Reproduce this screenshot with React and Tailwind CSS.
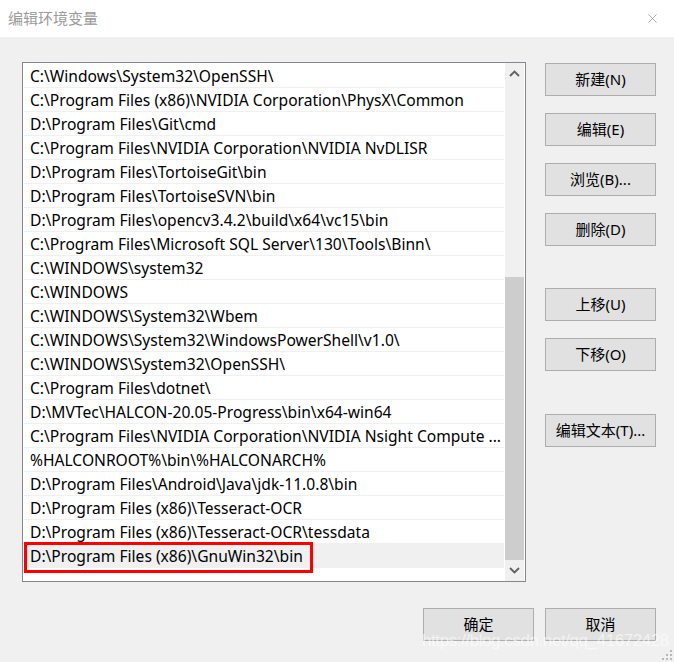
import { X } from "lucide-react";

/* ─── Data ─── */
const paths = [
  "C:\\Windows\\System32\\OpenSSH\\",
  "C:\\Program Files (x86)\\NVIDIA Corporation\\PhysX\\Common",
  "D:\\Program Files\\Git\\cmd",
  "C:\\Program Files\\NVIDIA Corporation\\NVIDIA NvDLISR",
  "D:\\Program Files\\TortoiseGit\\bin",
  "D:\\Program Files\\TortoiseSVN\\bin",
  "D:\\Program Files\\opencv3.4.2\\build\\x64\\vc15\\bin",
  "C:\\Program Files\\Microsoft SQL Server\\130\\Tools\\Binn\\",
  "C:\\WINDOWS\\system32",
  "C:\\WINDOWS",
  "C:\\WINDOWS\\System32\\Wbem",
  "C:\\WINDOWS\\System32\\WindowsPowerShell\\v1.0\\",
  "C:\\WINDOWS\\System32\\OpenSSH\\",
  "C:\\Program Files\\dotnet\\",
  "D:\\MVTec\\HALCON-20.05-Progress\\bin\\x64-win64",
  "C:\\Program Files\\NVIDIA Corporation\\NVIDIA Nsight Compute ...",
  "%HALCONROOT%\\bin\\%HALCONARCH%",
  "D:\\Program Files\\Android\\Java\\jdk-11.0.8\\bin",
  "D:\\Program Files (x86)\\Tesseract-OCR",
  "D:\\Program Files (x86)\\Tesseract-OCR\\tessdata",
  "D:\\Program Files (x86)\\GnuWin32\\bin",
];

const font = { fontFamily: '"Noto Sans", "Noto Sans CJK SC", sans-serif' };

function Btn({ children, className = "" }) {
  return (
    <button className={`w-[111px] h-[33px] bg-[#e1e1e1] border border-[#adadad] text-[15px] text-black flex items-center justify-center ${className}`}>
      {children}
    </button>
  );
}

function Chevron({ up }) {
  return (
    <svg width="11" height="7" viewBox="0 0 11 7">
      <path d={up ? "M1 6 L5.5 1.5 L10 6" : "M1 1 L5.5 5.5 L10 1"} fill="none" stroke="#606060" strokeWidth="1.8" />
    </svg>
  );
}

export default function App() {
  const selected = paths.length - 1;

  return (
    <div className="w-[674px] h-[662px] flex flex-col bg-[#f0f0f0] relative overflow-hidden" style={font}>
      {/* title bar */}
      <div className="h-[37px] bg-white flex items-center justify-between pl-[8px] pr-[14px]">
        <span className="text-[15px] text-[#9a9a9a]">编辑环境变量</span>
        <X className="w-[15px] h-[15px] text-[#888888]" strokeWidth={1.1} />
      </div>

      <div className="flex-1 flex flex-col">
        <div className="flex pt-[25px] pl-[22px]">
          {/* list box */}
          <div className="w-[504px] h-[520px] border border-[#828790] bg-white flex">
            <div className="flex-1 pt-px px-px">
              {paths.map((p, i) => (
                <div
                  key={i}
                  className={`relative h-[24px] border-b border-[#f0f0f0] pl-[6px] pt-[3px] flex items-center text-[15.6px] text-black whitespace-nowrap ${i === selected ? "bg-[#f0f0f0]" : ""}`}
                >
                  <span className="overflow-hidden">{p}</span>
                  {i === selected && (
                    <div className="absolute left-0 top-[-2px] w-[289px] h-[31px] border-[3px] border-[#ff0000]" />
                  )}
                </div>
              ))}
            </div>
            {/* scrollbar */}
            <div className="w-[19px] mr-px bg-[#f0f0f0] flex flex-col">
              <div className="h-[20px] flex items-center justify-center pt-[1px]">
                <Chevron up />
              </div>
              <div className="flex-1 flex flex-col justify-end">
                <div className="h-[283px] bg-[#cdcdcd]" />
              </div>
              <div className="h-[21px] flex items-center justify-center">
                <Chevron />
              </div>
            </div>
          </div>

          {/* side buttons */}
          <div className="ml-[19px] pt-px flex flex-col">
            <Btn>新建(N)</Btn>
            <Btn className="mt-[17px]">编辑(E)</Btn>
            <Btn className="mt-[17px]">浏览(B)...</Btn>
            <Btn className="mt-[17px]">删除(D)</Btn>
            <Btn className="mt-[42px]">上移(U)</Btn>
            <Btn className="mt-[17px]">下移(O)</Btn>
            <Btn className="mt-[43px]">编辑文本(T)...</Btn>
          </div>
        </div>

        {/* footer */}
        <div className="flex justify-end gap-[11px] pr-[18px] mt-[26px]">
          <Btn>确定</Btn>
          <Btn>取消</Btn>
        </div>
      </div>

      {/* watermark */}
      <div className="absolute left-[422px] top-[628px] text-[17px] text-white/60 tracking-tight pointer-events-none" style={{ fontFamily: '"Liberation Sans", sans-serif' }}>
        https://blog.csdn.net/qq_41672428
      </div>

      {/* resize grip */}
      <svg className="absolute right-[2px] bottom-[2px]" width="10" height="10" viewBox="0 0 10 10">
        <g fill="#b8b8b8">
          <rect x="8" y="0" width="2" height="2" />
          <rect x="4" y="4" width="2" height="2" />
          <rect x="8" y="4" width="2" height="2" />
          <rect x="0" y="8" width="2" height="2" />
          <rect x="4" y="8" width="2" height="2" />
          <rect x="8" y="8" width="2" height="2" />
        </g>
      </svg>
    </div>
  );
}
